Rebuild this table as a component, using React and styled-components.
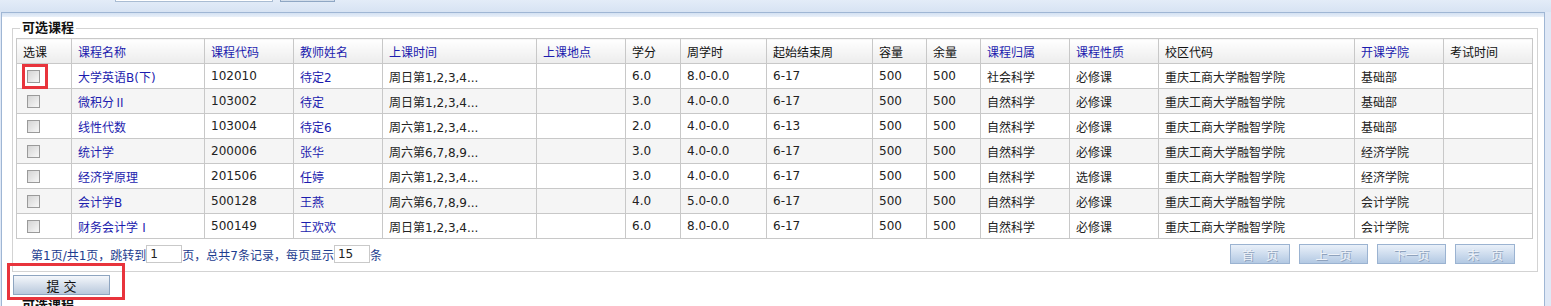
import React from 'react';
import styled, { createGlobalStyle } from 'styled-components';

const GlobalStyle = createGlobalStyle`
  html, body { margin: 0; padding: 0; }
  body {
    background: #dfe8f6;
    font-family: "DejaVu Sans", "Noto Sans CJK SC", sans-serif;
    font-size: 12px;
    color: #222;
    overflow: hidden;
  }
`;

const TopBar = styled.div`
  height: 12px;
  display: flex;
  align-items: flex-start;
  gap: 7px;
  padding-left: 115px;
  overflow: hidden;
  background: linear-gradient(#e3ecf8, #d7e3f3);
`;

const StubInput = styled.div`
  width: 156px;
  height: 20px;
  margin-top: -20px;
  background: #fff;
  border: 1px solid #a9bcd3;
`;

const StubButton = styled.div`
  width: 53px;
  height: 20px;
  margin-top: -20px;
  background: linear-gradient(#f2f5f9, #d3deeb);
  border: 1px solid #8fa7c4;
`;

const Panel = styled.div`
  margin: 0 6px 0 1px;
  border: 1px solid #9fb6d4;
  border-bottom: none;
  background: #fff;
  min-height: 400px;
`;

const PanelBand = styled.div`
  height: 4px;
  background: linear-gradient(#d3e1f2, #e9f0f9);
`;

const Group = styled.fieldset`
  margin: 4px 6px 0 10px;
  padding: 3px 4px 7px 3px;
  border: 1px solid #d3d3d3;
  min-width: 0;
`;

const Legend = styled.legend`
  margin-left: 4px;
  padding: 0 2px;
  font-weight: bold;
  font-size: 13px;
  line-height: 14px;
  color: #111;
`;

const Table = styled.table`
  width: 1516px;
  table-layout: fixed;
  border-collapse: collapse;
`;

const Th = styled.th`
  height: 24px;
  padding: 0 6px;
  border: 1px solid #c8c8c8;
  background: linear-gradient(#ffffff, #ececec);
  font-weight: normal;
  text-align: left;
  white-space: nowrap;
  color: ${p => (p.$link ? '#1c1cae' : '#111')};
`;

const Row = styled.tr`
  background: ${p => (p.$alt ? '#f5f5f5' : '#fff')};
`;

const Td = styled.td`
  height: 24px;
  padding: 0 6px;
  border: 1px solid #c8c8c8;
  white-space: nowrap;
  overflow: hidden;
  color: ${p => (p.$link ? '#1c1cae' : '#222')};
`;

const Roman = styled.span`
  font-family: "Noto Sans CJK SC", sans-serif;
`;

const CheckCell = styled.td`
  height: 24px;
  padding: 0 0 0 10px;
  border: 1px solid #c8c8c8;
`;

const CheckWrap = styled.span`
  position: relative;
  display: block;
  width: 13px;
  height: 13px;
`;

const CheckBox = styled.span`
  display: block;
  width: 11px;
  height: 11px;
  border: 1px solid #9a9a9a;
  background: linear-gradient(135deg, #d4d4d4, #f7f7f7);
`;

const Highlight = styled.span`
  position: absolute;
  border: 3px solid #e8343c;
  pointer-events: none;
  left: ${p => p.$l}px;
  top: ${p => p.$t}px;
  width: ${p => p.$w}px;
  height: ${p => p.$h}px;
  box-sizing: border-box;
`;

const Pager = styled.div`
  display: flex;
  align-items: center;
  justify-content: space-between;
  margin-top: 5px;
  height: 20px;
  padding: 0 18px 0 15px;
`;

const PagerText = styled.div`
  display: flex;
  align-items: center;
  color: #1e3d8f;
  white-space: nowrap;
`;

const PageInput = styled.span`
  display: inline-block;
  box-sizing: border-box;
  width: 36px;
  height: 18px;
  line-height: 16px;
  padding-left: 3px;
  border: 1px solid #c9c9c9;
  background: #fff;
  color: #222;
`;

const PageButtons = styled.div`
  display: flex;
  gap: 9px;
`;

const PageButton = styled.button`
  box-sizing: border-box;
  width: ${p => p.$w}px;
  height: 20px;
  padding: 0;
  border: 1px solid #9bb3d1;
  background: linear-gradient(#e9f0f9, #b3c9e3);
  font-family: "DejaVu Sans", "Noto Sans CJK SC", sans-serif;
  font-size: 12px;
  color: #eef2f8;
  text-shadow: 1px 1px 0 #8ea2bd;
`;

const SubmitRow = styled.div`
  margin: 3px 0 0 11px;
`;

const SubmitWrap = styled.span`
  position: relative;
  display: inline-block;
`;

const SubmitButton = styled.button`
  box-sizing: border-box;
  display: block;
  width: 97px;
  height: 20px;
  padding: 0 0 0 4px;
  border: 1px solid #8ea5c0;
  background: linear-gradient(#f4f7fb, #b8c8dc);
  font-family: "DejaVu Sans", "Noto Sans CJK SC", sans-serif;
  font-size: 13px;
  letter-spacing: 4px;
  color: #111;
`;

const NextGroup = styled(Group)`
  margin-top: 4px;
  height: 40px;
`;

const columns = [
  { title: '选课', w: 55 },
  { title: '课程名称', w: 133, link: true },
  { title: '课程代码', w: 89, link: true },
  { title: '教师姓名', w: 89, link: true },
  { title: '上课时间', w: 154, link: true },
  { title: '上课地点', w: 89, link: true },
  { title: '学分', w: 55 },
  { title: '周学时', w: 86 },
  { title: '起始结束周', w: 106 },
  { title: '容量', w: 54 },
  { title: '余量', w: 54 },
  { title: '课程归属', w: 89, link: true },
  { title: '课程性质', w: 89, link: true },
  { title: '校区代码', w: 196 },
  { title: '开课学院', w: 89, link: true },
  { title: '考试时间', w: 89 },
];

const campus = '重庆工商大学融智学院';

const courses = [
  [<>大学英语B(下)</>, '102010', '待定2', '周日第1,2,3,4...', '6.0', '8.0-0.0', '6-17', '社会科学', '必修课', '基础部'],
  [<>微积分<Roman>Ⅱ</Roman></>, '103002', '待定', '周日第1,2,3,4...', '3.0', '4.0-0.0', '6-17', '自然科学', '必修课', '基础部'],
  [<>线性代数</>, '103004', '待定6', '周六第1,2,3,4...', '2.0', '4.0-0.0', '6-13', '自然科学', '必修课', '基础部'],
  [<>统计学</>, '200006', '张华', '周六第6,7,8,9...', '3.0', '4.0-0.0', '6-17', '自然科学', '必修课', '经济学院'],
  [<>经济学原理</>, '201506', '任婷', '周六第1,2,3,4...', '3.0', '4.0-0.0', '6-17', '自然科学', '选修课', '经济学院'],
  [<>会计学B</>, '500128', '王燕', '周六第6,7,8,9...', '4.0', '5.0-0.0', '6-17', '自然科学', '必修课', '会计学院'],
  [<>财务会计学<Roman>Ⅰ</Roman></>, '500149', '王欢欢', '周日第1,2,3,4...', '6.0', '8.0-0.0', '6-17', '自然科学', '必修课', '会计学院'],
];

const CourseRow = ({ course, index }) => {
  const [name, code, teacher, time, credit, hours, weeks, belong, kind, college] = course;
  return (
    <Row $alt={index % 2 === 1}>
      <CheckCell>
        <CheckWrap>
          <CheckBox />
          {index === 0 && <Highlight $l={-5} $t={-6} $w={26} $h={25} />}
        </CheckWrap>
      </CheckCell>
      <Td $link>{name}</Td>
      <Td>{code}</Td>
      <Td $link>{teacher}</Td>
      <Td>{time}</Td>
      <Td></Td>
      <Td>{credit}</Td>
      <Td>{hours}</Td>
      <Td>{weeks}</Td>
      <Td>500</Td>
      <Td>500</Td>
      <Td>{belong}</Td>
      <Td>{kind}</Td>
      <Td>{campus}</Td>
      <Td>{college}</Td>
      <Td></Td>
    </Row>
  );
};

const App = () => (
  <>
    <GlobalStyle />
    <TopBar>
      <StubInput />
      <StubButton />
    </TopBar>
    <Panel>
      <PanelBand />
      <Group>
        <Legend>可选课程</Legend>
        <Table>
          <colgroup>
            {columns.map(c => (
              <col key={c.title} style={{ width: c.w }} />
            ))}
          </colgroup>
          <thead>
            <tr>
              {columns.map(c => (
                <Th key={c.title} $link={c.link}>{c.title}</Th>
              ))}
            </tr>
          </thead>
          <tbody>
            {courses.map((c, i) => (
              <CourseRow key={c[1]} course={c} index={i} />
            ))}
          </tbody>
        </Table>
        <Pager>
          <PagerText>
            第1页/共1页，跳转到<PageInput>1</PageInput>页，总共7条记录，每页显示<PageInput>15</PageInput>条
          </PagerText>
          <PageButtons>
            <PageButton $w={60}>首　页</PageButton>
            <PageButton $w={69}>上一页</PageButton>
            <PageButton $w={69}>下一页</PageButton>
            <PageButton $w={60}>末　页</PageButton>
          </PageButtons>
        </Pager>
      </Group>
      <SubmitRow>
        <SubmitWrap>
          <SubmitButton>提交</SubmitButton>
          <Highlight $l={-6} $t={-12} $w={118} $h={37} />
        </SubmitWrap>
      </SubmitRow>
      <NextGroup>
        <Legend>可选课程</Legend>
      </NextGroup>
    </Panel>
  </>
);

export default App;
